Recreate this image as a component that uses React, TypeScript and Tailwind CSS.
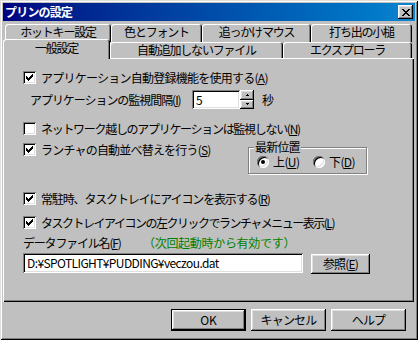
import React from "react";

const raised =
  "shadow-[inset_-1px_-1px_#000,inset_1px_1px_#fff,inset_-2px_-2px_#808080,inset_2px_2px_#dfdfdf]";
const sunken =
  "shadow-[inset_1px_1px_#808080,inset_-1px_-1px_#fff,inset_2px_2px_#000,inset_-2px_-2px_#dfdfdf]";

function U({ children }: { children: React.ReactNode }) {
  return <span className="underline underline-offset-[1px]">{children}</span>;
}

function Check({ checked }: { checked: boolean }) {
  return (
    <div className={`relative w-[13px] h-[13px] shrink-0 bg-white ${sunken}`}>
      {checked && (
        <svg
          className="absolute left-[3px] top-[3px]"
          width="7"
          height="7"
          viewBox="0 0 7 7"
          shapeRendering="crispEdges"
        >
          <rect x="6" y="0" width="1" height="1" fill="#000" />
          <rect x="5" y="1" width="2" height="1" fill="#000" />
          <rect x="0" y="2" width="1" height="1" fill="#000" />
          <rect x="4" y="2" width="3" height="1" fill="#000" />
          <rect x="0" y="3" width="2" height="1" fill="#000" />
          <rect x="3" y="3" width="3" height="1" fill="#000" />
          <rect x="0" y="4" width="5" height="1" fill="#000" />
          <rect x="1" y="5" width="3" height="1" fill="#000" />
          <rect x="2" y="6" width="1" height="1" fill="#000" />
        </svg>
      )}
    </div>
  );
}

function Radio({ checked }: { checked: boolean }) {
  return (
    <div className="w-[12px] h-[12px] shrink-0 rounded-full bg-white flex items-center justify-center shadow-[inset_1px_1px_#808080,inset_-1px_-1px_#fff,inset_2px_2px_#000,inset_-2px_-2px_#dfdfdf]">
      {checked && <div className="w-[4px] h-[4px] rounded-full bg-black" />}
    </div>
  );
}

function Btn({
  children,
  className,
  def,
}: {
  children: React.ReactNode;
  className: string;
  def?: boolean;
}) {
  if (def) {
    return (
      <div className={`border border-black flex ${className}`}>
        <div className={`flex-1 flex items-center justify-center ${raised}`}>{children}</div>
      </div>
    );
  }
  return <div className={`flex items-center justify-center ${raised} ${className}`}>{children}</div>;
}

const tabCls =
  "flex items-center justify-center whitespace-nowrap leading-[12px] bg-[#c0c0c0] rounded-t-[3px] shadow-[inset_1px_1px_#fff,inset_-1px_0_#000,inset_-2px_0_#808080]";

export default function App() {
  return (
    <div className="w-[418px] h-[340px] bg-[#c0c0c0] p-[3px] text-[12px] leading-[14px] text-black whitespace-nowrap font-['Noto_Sans_CJK_JP',sans-serif] shadow-[inset_1px_1px_#dfdfdf,inset_-1px_-1px_#000,inset_2px_2px_#fff,inset_-2px_-2px_#808080] flex flex-col">
      {/* title bar */}
      <div className="h-[18px] flex items-center bg-gradient-to-r from-[#000080] to-[#1084d0] pl-[2px] pr-[2px]">
        <span className="text-white font-bold text-[12px] leading-[14px] tracking-[-0.8px]">プリンの設定</span>
        <div className={`ml-auto w-[15px] h-[14px] bg-[#c0c0c0] flex items-center justify-center ${raised}`}>
          <svg width="8" height="7" viewBox="0 0 8 7" shapeRendering="crispEdges">
            <path
              d="M0 0h2v1H0zM6 0h2v1H6zM1 1h2v1H1zM5 1h2v1H5zM2 2h4v1H2zM3 3h2v1H3zM2 4h4v1H2zM1 5h2v1H1zM5 5h2v1H5zM0 6h2v1H0zM6 6h2v1H6z"
              fill="#000"
            />
          </svg>
        </div>
      </div>

      {/* tab row 1 */}
      <div className="mt-[3px] h-[18px] flex pl-[2px] tracking-[-1.2px]">
        <div className={`${tabCls} w-[106px] pb-[2px]`}>ホットキー設定</div>
        <div className={`${tabCls} w-[91px] pb-[2px]`}>色とフォント</div>
        <div className={`${tabCls} w-[109px] pb-[2px]`}>追っかけマウス</div>
        <div className={`${tabCls} w-[101px] pb-[2px]`}>打ち出の小槌</div>
      </div>
      {/* tab row 2 */}
      <div className="-mt-[3px] h-[19px] flex items-end relative z-10 tracking-[-1.2px]">
        <div className={`${tabCls} w-[107px] h-[20px] -mb-[1px] pb-[2px]`}>一般設定</div>
        <div className={`${tabCls} w-[173px] h-[16px]`}>自動追加しないファイル</div>
        <div className={`${tabCls} w-[129px] h-[16px]`}>エクスプローラ</div>
      </div>

      {/* panel */}
      <div className="w-[411px] h-[244px] flex flex-col shadow-[inset_1px_1px_#fff,inset_-1px_-1px_#000,inset_-2px_-2px_#808080]">
        <div className="mt-[13px] h-[13px] flex items-center pl-[20px] gap-[5px]">
          <Check checked />
          <span className="tracking-[-0.75px]">
            アプリケーション自動登録機能を使用する(<U>A</U>)
          </span>
        </div>

        <div className="mt-[6px] h-[19px] flex items-center pl-[27px]">
          <span className="w-[162px] tracking-[-1.05px]">
            アプリケーションの監視間隔(<U>I</U>)
          </span>
          <div className={`w-[48px] h-[19px] bg-white flex items-center pl-[4px] ${sunken}`}>5</div>
          <div className="w-[14px] h-[19px] flex flex-col">
            <div className={`h-[10px] flex items-center justify-center ${raised}`}>
              <svg width="5" height="3" viewBox="0 0 5 3" shapeRendering="crispEdges">
                <path d="M2 0h1v1H2zM1 1h3v1H1z" fill="#000" />
              </svg>
            </div>
            <div className={`h-[9px] flex items-center justify-center ${raised}`}>
              <svg width="5" height="3" viewBox="0 0 5 3" shapeRendering="crispEdges">
                <path d="M1 0h3v1H1zM2 1h1v1H2z" fill="#000" />
              </svg>
            </div>
          </div>
          <span className="ml-[8px]">秒</span>
        </div>

        <div className="mt-[13px] h-[13px] flex items-center pl-[20px] gap-[5px]">
          <Check checked={false} />
          <span className="tracking-[-1.3px]">
            ネットワーク越しのアプリケーションは監視しない(<U>N</U>)
          </span>
        </div>

        <div className="mt-[8px] flex items-start pl-[20px]">
          <div className="w-[225px] h-[13px] flex items-center gap-[5px]">
            <Check checked />
            <span className="tracking-[-0.8px]">
              ランチャの自動並べ替えを行う(<U>S</U>)
            </span>
          </div>
          <div className="relative mt-[4px] w-[119px] h-[27px] border border-[#808080] shadow-[inset_1px_1px_#fff,1px_1px_#fff] flex items-center pl-[8px]">
            <span className="absolute left-[5px] -top-[7px] px-[1px] bg-[#c0c0c0] leading-[12px] tracking-[-0.8px]">最新位置</span>
            <div className="flex items-center gap-[4px] w-[56px] mt-[3px]">
              <Radio checked />
              <span className="leading-[12px] tracking-[-0.6px]">
                上(<U>U</U>)
              </span>
            </div>
            <div className="flex items-center gap-[4px] mt-[3px]">
              <Radio checked={false} />
              <span className="leading-[12px] tracking-[-0.6px]">
                下(<U>D</U>)
              </span>
            </div>
          </div>
        </div>

        <div className="mt-[18px] h-[13px] flex items-center pl-[20px] gap-[5px]">
          <Check checked />
          <span className="tracking-[-1.15px]">
            常駐時、タスクトレイにアイコンを表示する(<U>R</U>)
          </span>
        </div>

        <div className="mt-[11px] h-[13px] flex items-center pl-[20px] gap-[5px]">
          <Check checked />
          <span className="tracking-[-1.5px]">
            タスクトレイアイコンの左クリックでランチャメニュー表示(<U>L</U>)
          </span>
        </div>

        <div className="mt-[7px] h-[14px] flex items-center pl-[20px]">
          <span className="w-[120px] tracking-[-1.2px]">
            データファイル名(<U>F</U>)
          </span>
          <span className="text-[#008000] tracking-[-0.3px]">（次回起動時から有効です）</span>
        </div>

        <div className="mt-[3px] flex items-start pl-[20px]">
          <div className={`w-[280px] h-[20px] bg-white flex items-center pl-[4px] tracking-[-0.6px] ${sunken}`}>
            D:¥SPOTLIGHT¥PUDDING¥veczou.dat
          </div>
          <Btn className="ml-[8px] mt-[1px] w-[59px] h-[20px] tracking-[-0.8px]">
            参照(<U>E</U>)
          </Btn>
        </div>
      </div>

      {/* buttons */}
      <div className="mt-[7px] h-[22px] flex justify-end gap-[5px] pr-[9px]">
        <Btn def className="w-[75px] h-[22px]">
          OK
        </Btn>
        <Btn className="w-[75px] h-[22px] tracking-[-0.8px]">キャンセル</Btn>
        <Btn className="w-[75px] h-[22px] tracking-[-0.8px]">ヘルプ</Btn>
      </div>
    </div>
  );
}
